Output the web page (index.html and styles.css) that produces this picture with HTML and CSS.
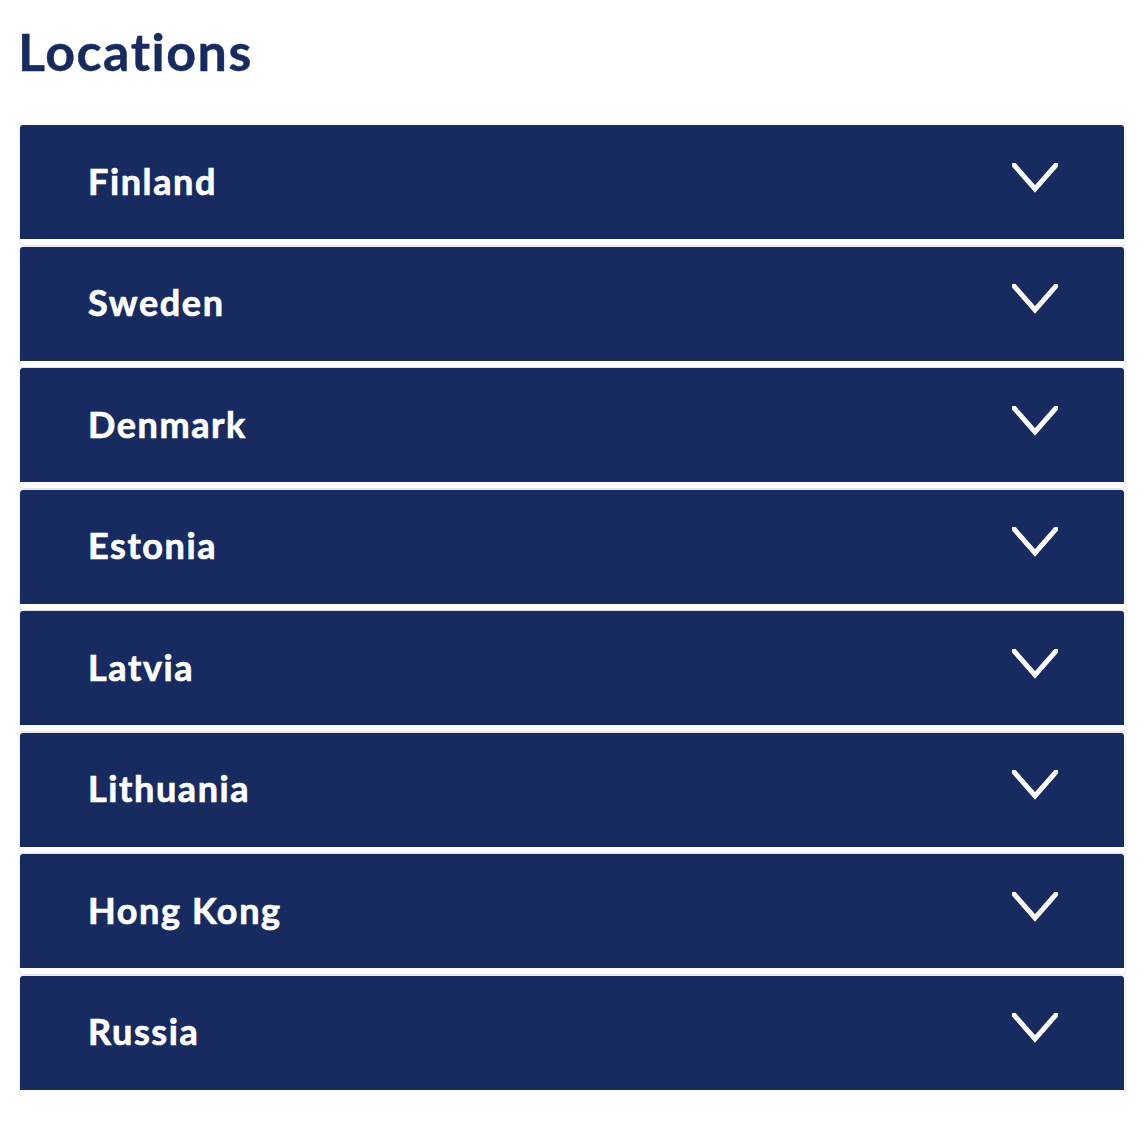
FILE: index.html
```html
<!DOCTYPE html>
<html>
<head>
<meta charset="utf-8">
<link rel="stylesheet" href="styles.css">
</head>
<body>
<main class="page">
  <h1 class="title">Locations</h1>
  <div class="accordion">
    <div class="card"><div class="head"><span class="name">Finland</span><svg class="chev" viewBox="0 0 46 30"><polyline points="2,2 23,26 44,2"/></svg></div></div>
    <div class="card"><div class="head"><span class="name">Sweden</span><svg class="chev" viewBox="0 0 46 30"><polyline points="2,2 23,26 44,2"/></svg></div></div>
    <div class="card"><div class="head"><span class="name">Denmark</span><svg class="chev" viewBox="0 0 46 30"><polyline points="2,2 23,26 44,2"/></svg></div></div>
    <div class="card"><div class="head"><span class="name">Estonia</span><svg class="chev" viewBox="0 0 46 30"><polyline points="2,2 23,26 44,2"/></svg></div></div>
    <div class="card"><div class="head"><span class="name">Latvia</span><svg class="chev" viewBox="0 0 46 30"><polyline points="2,2 23,26 44,2"/></svg></div></div>
    <div class="card"><div class="head"><span class="name">Lithuania</span><svg class="chev" viewBox="0 0 46 30"><polyline points="2,2 23,26 44,2"/></svg></div></div>
    <div class="card"><div class="head"><span class="name">Hong Kong</span><svg class="chev" viewBox="0 0 46 30"><polyline points="2,2 23,26 44,2"/></svg></div></div>
    <div class="card"><div class="head"><span class="name">Russia</span><svg class="chev" viewBox="0 0 46 30"><polyline points="2,2 23,26 44,2"/></svg></div></div>
  </div>
</main>
</body>
</html>
```

FILE: styles.css
```css
html, body {
  margin: 0;
  padding: 0;
  background: #ffffff;
}
.page {
  padding: 22px 21px 0 20px;
  font-family: Lato, "Liberation Sans", sans-serif;
}
.title {
  margin: 0 0 45px -2px;
  font-size: 52px;
  line-height: 58px;
  font-weight: 700;
  color: #172b61;
  letter-spacing: 1.5px;
  -webkit-text-stroke: 0.4px #172b61;
}
.accordion {
  display: flex;
  flex-direction: column;
  gap: 1.57px;
}
.card {
  background: #fff;
  border-radius: 4px;
  padding-bottom: 6px;
  box-shadow: 0 1px 3px rgba(0, 0, 0, 0.16);
}
.head {
  height: 114px;
  background: #172b61;
  margin-right: 1px;
  border-radius: 3px 3px 0 0;
  display: flex;
  align-items: center;
  padding: 0 66px 0 68px;
}
.name {
  flex: 1;
  color: #fff;
  font-size: 36px;
  font-weight: 700;
  letter-spacing: 1.6px;
  padding-bottom: 3px;
  -webkit-text-stroke: 0.7px #fff;
}
.chev {
  width: 46px;
  height: 30px;
  margin-top: -9px;
  fill: none;
  stroke: #fff;
  stroke-width: 5;
  stroke-linecap: square;
}
```
